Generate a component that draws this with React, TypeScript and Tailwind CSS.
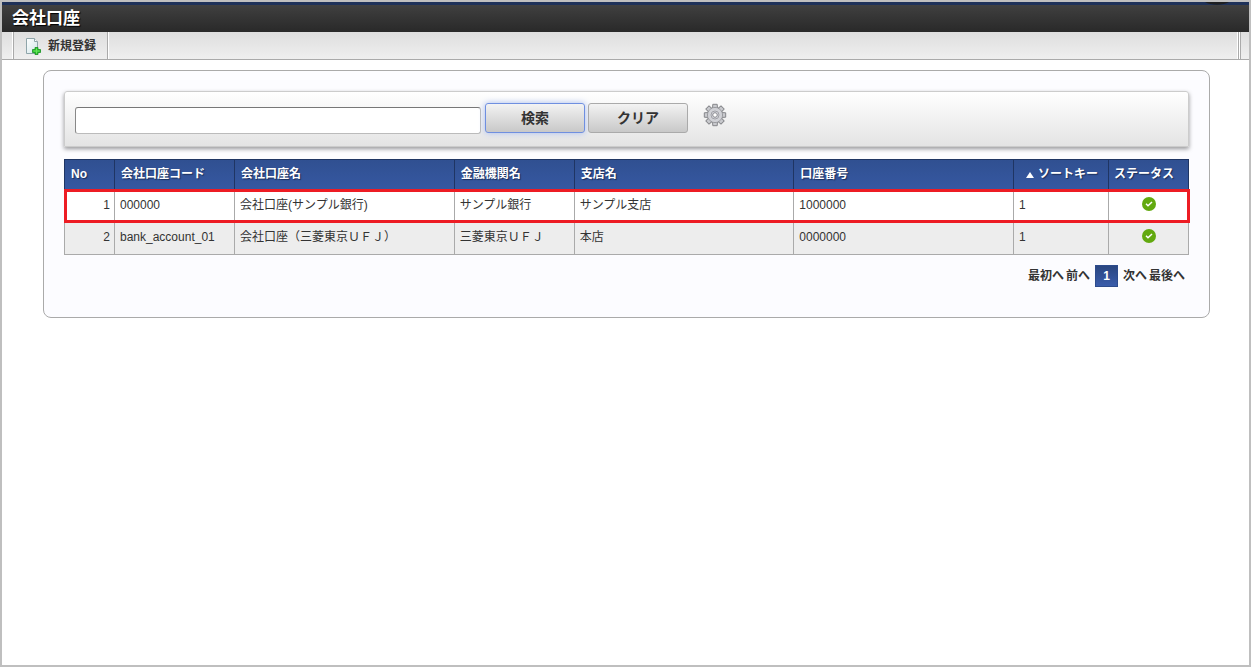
import { useState } from 'react';

interface BankAccount {
  code: string;
  name: string;
  bank: string;
  branch: string;
  accountNumber: string;
  sortKey: number;
}

const accounts: BankAccount[] = [
  {
    code: '000000',
    name: '会社口座(サンプル銀行)',
    bank: 'サンプル銀行',
    branch: 'サンプル支店',
    accountNumber: '1000000',
    sortKey: 1,
  },
  {
    code: 'bank_account_01',
    name: '会社口座（三菱東京ＵＦＪ）',
    bank: '三菱東京ＵＦＪ',
    branch: '本店',
    accountNumber: '0000000',
    sortKey: 1,
  },
];

const headers = ['No', '会社口座コード', '会社口座名', '金融機関名', '支店名', '口座番号'];

function NewFileIcon() {
  return (
    <svg width="16" height="18" viewBox="0 0 16 18" aria-hidden="true">
      <defs>
        <linearGradient id="paper" x1="0" y1="0" x2="1" y2="1">
          <stop offset="0" stopColor="#ffffff" />
          <stop offset="1" stopColor="#cfe4e8" />
        </linearGradient>
      </defs>
      <path
        d="M1.500 1.500h8l3 3v12h-11z"
        fill="url(#paper)"
        stroke="#8fa5aa"
      />
      <path d="M9.500 1.500v3h3" fill="#fff" stroke="#8fa5aa" />
      <path
        d="M10 10.500h3v2h2.500v3h-2.500v2h-3v-2h-2.500v-3h2.500z"
        fill="#2fc42f"
        stroke="#159022"
        strokeWidth="0.8"
      />
      <path d="M11.500 11.500v5M8.500 14h6" stroke="#6be55f" />
    </svg>
  );
}

function GearIcon() {
  const teeth = [0, 45, 90, 135, 180, 225, 270, 315];
  return (
    <svg width="24" height="24" viewBox="0 0 24 24" aria-hidden="true">
      <g fill="#c9cace" stroke="#85868a">
        {teeth.map((angle) => (
          <path
            key={angle}
            d="M9.500 6l.3-4.700h4.400l.3 4.700z"
            transform={`rotate(${angle} 12 12)`}
          />
        ))}
        <circle cx="12" cy="12" r="7.500" stroke="#96979b" />
      </g>
      <circle cx="12" cy="12" r="7" fill="#d0d1d6" />
      <circle cx="12" cy="12" r="4" fill="#dcdce2" stroke="#a0a1a7" />
      <circle cx="12" cy="12" r="2.300" fill="#fff" stroke="#85868c" />
    </svg>
  );
}

function StatusIcon() {
  return (
    <svg
      className="mx-auto block"
      width="14"
      height="14"
      viewBox="0 0 14 14"
      role="img"
      aria-label="有効"
    >
      <circle cx="7" cy="7" r="7" fill="#62a90f" />
      <path
        d="M4 6.800l2 2 4-3.800"
        fill="none"
        stroke="#fff"
        strokeWidth="1.500"
      />
    </svg>
  );
}

export default function App() {
  const [keyword, setKeyword] = useState('');

  return (
    <div className="flex min-h-screen flex-col border-2 border-[#bfbfbf] bg-white font-['Liberation_Sans','Noto_Sans_CJK_JP',sans-serif] text-xs text-[#333]">
      {/* Title bar */}
      <div className="flex h-[3px] justify-end bg-[#1e3159] pr-5">
        <svg width="24" height="3" viewBox="0 0 24 3" aria-hidden="true">
          <path d="M0 0h24c-3 1.800-7 2.800-12 2.800s-9-1-12-2.800z" fill="#1d1f22" />
        </svg>
      </div>
      <header className="flex h-[27px] items-center bg-linear-to-b from-[#404040] to-[#292929] px-[10px]">
        <h1 className="text-[17px] leading-6 font-bold text-white text-shadow-[1px_1px_1px_#000]">
          会社口座
        </h1>
      </header>

      {/* Toolbar */}
      <div className="flex h-7 justify-between border-b border-[#aaa] bg-linear-to-b from-[#dedede] to-[#efefef] pr-2 pl-[10px]">
        <div className="flex border-x border-white">
          <button
            type="button"
            className="flex items-center gap-[7px] border-x border-[#aaa] px-[11px] font-bold"
          >
            <NewFileIcon />
            新規登録
          </button>
        </div>
        <div className="flex border-l border-white">
          <div className="w-[3px] border-x border-[#aaa] bg-white"></div>
        </div>
      </div>

      <main className="mt-[10px] mr-[39px] ml-[41px] rounded-lg border border-[#aaa] bg-[#fcfcff] px-5 pt-5 pb-[30px]">
        {/* Search */}
        <form
          className="flex items-start rounded-t-[3px] border border-[#ccc] bg-linear-to-b from-white to-[#e4e4e4] px-[10px] pt-[11px] pb-3 shadow-[0_2px_4px_rgba(0,0,0,0.4)]"
          onSubmit={(e) => e.preventDefault()}
        >
          <input
            type="text"
            aria-label="検索キーワード"
            className="mt-1 h-[27px] w-[406px] rounded-[3px] border border-[#bbb] border-t-[#777] border-l-[#888] bg-white px-1"
            value={keyword}
            onChange={(e) => setKeyword(e.target.value)}
          />
          <button
            type="submit"
            className="ml-1 h-[30px] w-[100px] rounded-[3px] border border-[#6f8fe0] bg-linear-to-b from-[#f3f3f3] to-[#c8c8c8] text-sm font-bold shadow-[0_0_6px_#a9bdf0]"
          >
            検索
          </button>
          <button
            type="button"
            className="ml-[3px] h-[30px] w-[100px] rounded-[3px] border border-[#aaa] bg-linear-to-b from-[#f3f3f3] to-[#c8c8c8] text-sm font-bold"
            onClick={() => setKeyword('')}
          >
            クリア
          </button>
          <button type="button" aria-label="設定" className="ml-[15px]">
            <GearIcon />
          </button>
        </form>

        {/* Account list */}
        <table className="mt-3 w-full table-fixed border-collapse">
          <colgroup>
            <col className="w-[50px]" />
            <col className="w-[120px]" />
            <col />
            <col className="w-[120px]" />
            <col />
            <col />
            <col className="w-[95px]" />
            <col className="w-[80px]" />
          </colgroup>
          <thead>
            <tr className="h-[30px] bg-linear-to-b from-[#305091] to-[#3658a2] text-left text-white text-shadow-[1px_1px_1px_#1b2f5a]">
              {headers.map((header) => (
                <th key={header} className="border border-[#1f3563] px-[6px] pb-px">
                  {header}
                </th>
              ))}
              <th className="border border-[#1f3563] px-[10px] pb-px text-right whitespace-nowrap">
                <svg
                  className="mr-1 inline-block"
                  width="8"
                  height="6"
                  viewBox="0 0 8 6"
                  aria-hidden="true"
                >
                  <path d="M4 0l4 6h-8z" fill="#fff" />
                </svg>
                ソートキー
              </th>
              <th className="border border-[#1f3563] px-[5px] pb-px whitespace-nowrap">
                ステータス
              </th>
            </tr>
          </thead>
          <tbody>
            {accounts.map((account, index) => (
              <tr
                key={account.code}
                className={
                  index === 0
                    ? 'h-8 bg-white outline-3 -outline-offset-2 outline-[#ed1c24]'
                    : 'h-[33px] bg-[#ededed]'
                }
              >
                <td className="border border-[#aaa] px-1 pb-[2px] text-right">
                  {index + 1}
                </td>
                <td className="border border-[#aaa] px-[5px] pb-[2px]">
                  {account.code}
                </td>
                <td className="border border-[#aaa] px-[5px] pb-[2px]">
                  {account.name}
                </td>
                <td className="border border-[#aaa] px-[5px] pb-[2px]">
                  {account.bank}
                </td>
                <td className="border border-[#aaa] px-[5px] pb-[2px]">
                  {account.branch}
                </td>
                <td className="border border-[#aaa] px-[5px] pb-[2px]">
                  {account.accountNumber}
                </td>
                <td className="border border-[#aaa] px-[5px] pb-[2px]">
                  {account.sortKey}
                </td>
                <td className="border border-[#aaa] px-[5px] pb-1">
                  <StatusIcon />
                </td>
              </tr>
            ))}
          </tbody>
        </table>

        {/* Pagination */}
        <nav className="mt-[10px] flex items-center justify-end gap-[2px] pr-1 font-bold">
          <a href="#first">最初へ</a>
          <a href="#prev">前へ</a>
          <span className="mx-[3px] w-[23px] border border-[#2d4b8c] bg-linear-to-b from-[#2a4680] to-[#3a5cab] text-center leading-5 text-white">
            1
          </span>
          <a href="#next">次へ</a>
          <a href="#last">最後へ</a>
        </nav>
      </main>
    </div>
  );
}
